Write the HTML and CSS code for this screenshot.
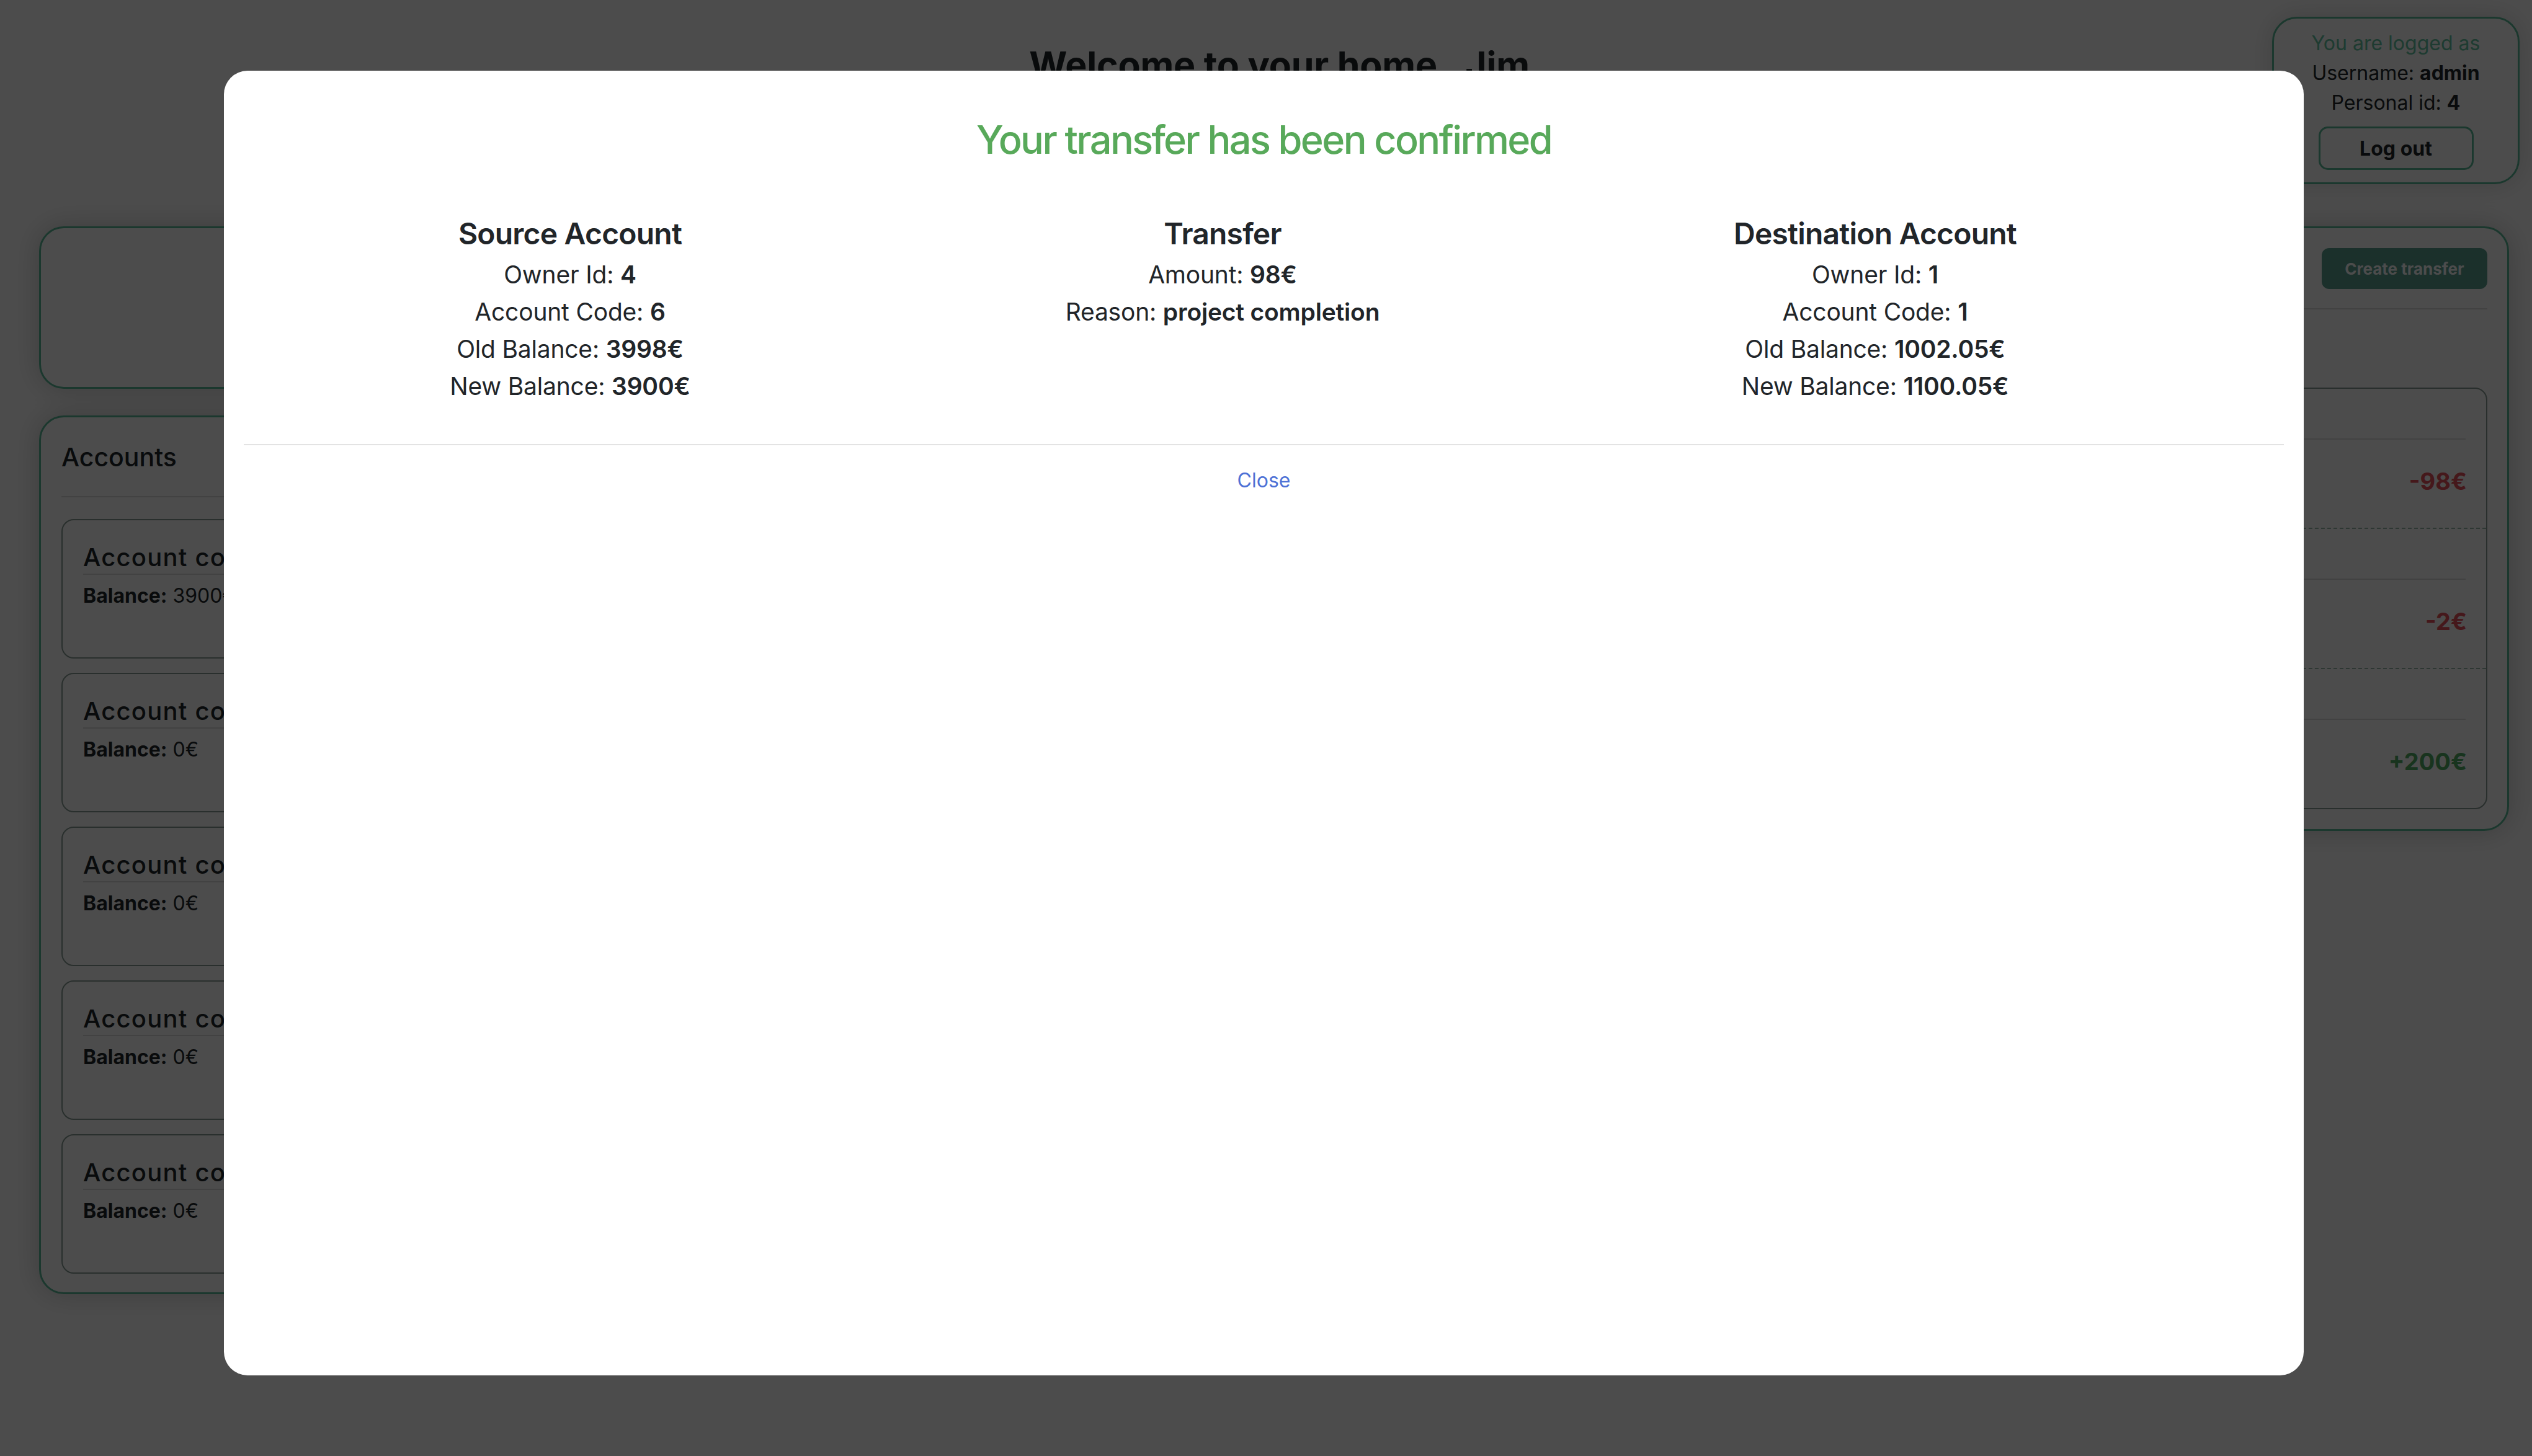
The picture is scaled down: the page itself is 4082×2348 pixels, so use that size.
FILE: index.html
```html
<!DOCTYPE html>
<html lang="en">
<head>
<meta charset="utf-8">
<title>Home</title>
<link rel="stylesheet" href="styles.css">
</head>
<body>
<div class="page">
  <header class="topbar">
    <h1 class="welcome">Welcome to your home , <span class="name">Jim</span></h1>
    <aside class="session">
      <div class="session-label">You are logged as</div>
      <div>Username: <b>admin</b></div>
      <div>Personal id: <b>4</b></div>
      <button class="btn-logout" type="button">Log out</button>
    </aside>
  </header>

  <main class="dashboard">
    <div class="col-left">
      <section class="panel summary">
        <h2 class="summary-title">Total balance</h2>
        <p class="summary-value">3900€</p>
      </section>

      <section class="panel accounts">
        <h2 class="panel-title">Accounts</h2>
        <div class="rule"></div>
        <div class="account-list">
          <article class="account-card">
            <h3 class="account-code">Account code: 6</h3>
            <p class="account-balance"><b>Balance:</b> 3900€</p>
          </article>
          <article class="account-card">
            <h3 class="account-code">Account code: 7</h3>
            <p class="account-balance"><b>Balance:</b> 0€</p>
          </article>
          <article class="account-card">
            <h3 class="account-code">Account code: 8</h3>
            <p class="account-balance"><b>Balance:</b> 0€</p>
          </article>
          <article class="account-card">
            <h3 class="account-code">Account code: 9</h3>
            <p class="account-balance"><b>Balance:</b> 0€</p>
          </article>
          <article class="account-card">
            <h3 class="account-code">Account code: 10</h3>
            <p class="account-balance"><b>Balance:</b> 0€</p>
          </article>
        </div>
      </section>
    </div>

    <section class="panel transfers">
      <div class="transfers-head">
        <h2 class="panel-title">Transfers</h2>
        <button class="btn-create" type="button">Create transfer</button>
      </div>
      <div class="rule"></div>
      <h3 class="history-title">History</h3>
      <div class="tx-card">
        <div class="tx-row">
          <div class="tx-head">From account 6 to account 1</div>
          <div class="tx-rule"></div>
          <div class="tx-body"><span class="tx-reason">project completion</span><span class="tx-amount neg">-98€</span></div>
        </div>
        <div class="tx-row">
          <div class="tx-head">From account 6 to account 2</div>
          <div class="tx-rule"></div>
          <div class="tx-body"><span class="tx-reason">fee</span><span class="tx-amount neg">-2€</span></div>
        </div>
        <div class="tx-row">
          <div class="tx-head">From account 1 to account 6</div>
          <div class="tx-rule"></div>
          <div class="tx-body"><span class="tx-reason">deposit</span><span class="tx-amount pos">+200€</span></div>
        </div>
      </div>
    </section>
  </main>
</div>

<div class="backdrop"></div>

<div class="modal" role="dialog">
  <h2 class="modal-title">Your transfer has been confirmed</h2>
  <div class="modal-grid">
    <div class="modal-col">
      <h4 class="col-title">Source Account</h4>
      <p>Owner Id: <b>4</b></p>
      <p>Account Code: <b>6</b></p>
      <p>Old Balance: <b>3998€</b></p>
      <p>New Balance: <b>3900€</b></p>
    </div>
    <div class="modal-col">
      <h4 class="col-title">Transfer</h4>
      <p>Amount: <b>98€</b></p>
      <p>Reason: <b>project completion</b></p>
    </div>
    <div class="modal-col">
      <h4 class="col-title">Destination Account</h4>
      <p>Owner Id: <b>1</b></p>
      <p>Account Code: <b>1</b></p>
      <p>Old Balance: <b>1002.05€</b></p>
      <p>New Balance: <b>1100.05€</b></p>
    </div>
  </div>
  <div class="modal-footer">
    <a class="close-link" href="#">Close</a>
  </div>
</div>
</body>
</html>
```

FILE: styles.css
```css
html, body {
  margin: 0;
  padding: 0;
}

body {
  width: 4082px;
  height: 2348px;
  overflow: hidden;
  background: #ffffff;
  color: #212529;
  font-family: Inter, "Noto Sans", "Liberation Sans", sans-serif;
}

/* ---------- background page ---------- */

.topbar {
  display: grid;
  grid-template-columns: 1fr auto 1fr;
  align-items: start;
  padding: 27px 20px 0 63px;
}

.welcome {
  grid-column: 2;
  margin: 42px 0 0;
  font-size: 59px;
  line-height: 72px;
  font-weight: 700;
  white-space: nowrap;
  letter-spacing: -0.2px;
}

.session {
  grid-column: 3;
  justify-self: end;
  width: 399px;
  box-sizing: border-box;
  border: 3px solid #5dbb99;
  border-radius: 40px;
  padding: 16px 20px 20px;
  text-align: center;
  font-size: 32px;
  line-height: 48px;
  background: #fff;
  box-shadow: 0 0 40px rgba(0, 0, 0, 0.15);
}

.session b {
  font-weight: 700;
}

.session-label {
  color: #66c7a3;
}

.btn-logout {
  display: block;
  width: 250px;
  height: 70px;
  margin: 14px auto 0;
  box-sizing: border-box;
  border: 3px solid #5dbb99;
  border-radius: 15px;
  background: transparent;
  color: #212529;
  font-family: inherit;
  font-size: 32px;
  font-weight: 700;
}

.dashboard {
  display: flex;
  align-items: flex-start;
  gap: 40px;
  padding: 68px 37px 0 63px;
}

.col-left {
  width: 1100px;
  flex: none;
  display: flex;
  flex-direction: column;
  gap: 43px;
}

.panel {
  box-sizing: border-box;
  border: 3px solid #5dbb99;
  border-radius: 40px;
  background: #fff;
  box-shadow: 0 0 45px rgba(0, 0, 0, 0.2);
}

.summary {
  height: 262px;
  padding: 40px 33px;
  text-align: center;
}

.summary-title {
  margin: 0;
  font-size: 40px;
  font-weight: 500;
}

.summary-value {
  margin: 20px 0 0;
  font-size: 56px;
  font-weight: 700;
}

.accounts {
  padding: 40px 30px 30px 33px;
}

.panel-title {
  margin: 0;
  font-size: 41px;
  line-height: 49px;
  font-weight: 500;
}

.rule {
  height: 2px;
  background: #dcdcdc;
}

.accounts .rule {
  margin: 38px 0 35px;
}

.account-list {
  display: flex;
  flex-direction: column;
  gap: 23px;
}

.account-card {
  height: 225px;
  box-sizing: border-box;
  border: 2px solid #8a9e96;
  border-radius: 20px;
  padding: 36px 33px;
}

.account-code {
  margin: 0;
  padding-bottom: 2px;
  border-bottom: 2px solid #dcdcdc;
  font-size: 40px;
  line-height: 48px;
  font-weight: 500;
  letter-spacing: 1.2px;
}

.account-balance {
  margin: 14px 0 0;
  font-size: 32px;
  line-height: 40px;
}

.account-balance b {
  font-weight: 700;
}

.transfers {
  flex: 1;
  padding: 32px 32px 32px 33px;
}

.transfers-head {
  display: flex;
  justify-content: space-between;
  align-items: center;
}

.btn-create {
  width: 267px;
  height: 66px;
  border: 0;
  border-radius: 12px;
  background: #5aa08f;
  color: #ffffff;
  font-family: inherit;
  font-size: 26px;
  font-weight: 700;
}

.transfers .rule {
  margin-top: 31px;
}

.history-title {
  margin: 0;
  height: 126px;
  display: flex;
  align-items: center;
  font-size: 36px;
  font-weight: 500;
}

.tx-card {
  border: 2px solid #8a9e96;
  border-radius: 20px;
}

.tx-row {
  height: 226px;
  box-sizing: border-box;
  padding: 0 31px 0 32px;
  border-bottom: 2px dashed #9cb8aa;
  display: grid;
  grid-template-rows: 80px 2px 1fr;
}

.tx-row:last-child {
  height: 224px;
  border-bottom: 0;
}

.tx-head {
  display: flex;
  align-items: center;
  font-size: 32px;
}

.tx-rule {
  background: #dcdcdc;
  margin-right: 2px;
}

.tx-body {
  display: flex;
  justify-content: space-between;
  align-items: baseline;
  padding-top: 44px;
  line-height: 46px;
}

.tx-reason {
  font-size: 32px;
}

.tx-amount {
  font-size: 38px;
  font-weight: 700;
}

.tx-amount.neg {
  color: #e8505b;
}

.tx-amount.pos {
  color: #53ad64;
}

/* ---------- overlay & modal ---------- */

.backdrop {
  position: fixed;
  inset: 0;
  background: rgba(0, 0, 0, 0.7);
}

.modal {
  position: fixed;
  top: 114px;
  left: 361px;
  width: 3353px;
  height: 2104px;
  box-sizing: border-box;
  padding: 0 32px;
  background: #ffffff;
  border-radius: 38px;
}

.modal-title {
  margin: 69px 0 0;
  text-align: center;
  font-size: 63px;
  line-height: 84px;
  font-weight: 500;
  letter-spacing: -2.6px;
  color: #58a95a;
}

.modal-grid {
  display: grid;
  grid-template-columns: repeat(3, 1052px);
  margin-top: 80px;
  text-align: center;
}

.col-title {
  margin: 0 0 6px;
  font-size: 48px;
  line-height: 60px;
  font-weight: 600;
  letter-spacing: -0.8px;
}

.modal-col p {
  margin: 0;
  font-size: 39px;
  line-height: 60px;
  letter-spacing: -0.2px;
}

.modal-col b {
  font-weight: 600;
}

.modal-footer {
  margin-top: 63px;
  padding-top: 37px;
  border-top: 2px solid #e3e3e3;
  text-align: center;
}

.close-link {
  font-size: 32px;
  line-height: 40px;
  color: #4d71d6;
  text-decoration: none;
}
```
